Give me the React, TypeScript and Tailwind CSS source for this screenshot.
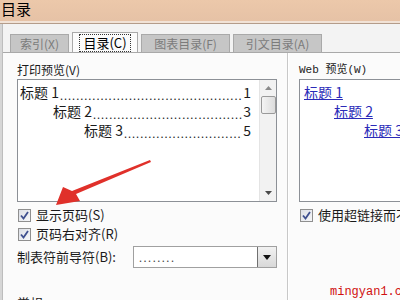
import React from "react";

const FONT = { fontFamily: '"Noto Sans CJK SC", "Noto Sans", sans-serif' };

function CheckBox() {
  return (
    <div className="w-[13px] h-[13px] border border-[#8f8f8f] bg-gradient-to-br from-[#dcdfe6] to-[#f6f7f9] flex items-center justify-center shrink-0">
      <svg width="11" height="11" viewBox="0 0 11 11">
        <path d="M2 5.5 L4.5 8.5 L9 2" fill="none" stroke="#3e4f8f" strokeWidth="1.8" />
      </svg>
    </div>
  );
}

function LeaderLine({ label, num, indent }: { label: string; num: string; indent: string }) {
  return (
    <div className={`flex items-end h-[19px] ${indent} pr-[8px] text-[14px] leading-[19px] text-[#1a1a1a]`}>
      <span className="whitespace-nowrap shrink-0">{label}</span>
      <span className="flex-1 min-w-0 w-0 overflow-hidden whitespace-nowrap text-[11px] leading-[14px] tracking-[1px] mx-[1px]">
        ........................................................................................
      </span>
      <span className="shrink-0">{num}</span>
    </div>
  );
}

export default function App() {
  return (
    <div className="relative w-[400px] h-[300px] overflow-hidden bg-[#f3f3f3] flex flex-col" style={FONT}>
      {/* title bar */}
      <div className="h-[21px] shrink-0 bg-gradient-to-b from-[#ecc8aa] to-[#e6c2a6] flex items-start px-[1px]">
        <span className="text-[15px] leading-[18px] text-black">目录</span>
      </div>
      <div className="h-[2px] shrink-0 bg-[#f1e2d6]" />
      <div className="h-[1px] shrink-0 bg-[#b49c8a]" />

      <div className="flex h-[276px] shrink-0">
        <div className="w-[3px] bg-[#d6d6d6] border-r border-[#bdbdbd] shrink-0" />
        <div className="flex-1 flex flex-col min-w-0">
          {/* tabs */}
          <div className="flex items-end h-[29px] shrink-0 pl-[7px] gap-[3px]">
            <div className="h-[19px] w-[59px] bg-[#c6c6c6] border border-[#a9a9a9] border-b-0 flex items-center justify-center text-[12px] text-[#7b7b7b]">
              索引(X)
            </div>
            <div className="h-[21px] w-[66px] bg-[#fbfbfb] border border-[#a9a9a9] border-b-0 flex items-center justify-center">
              <div className="border border-dotted border-[#333] px-[3px] h-[18px] flex items-center text-[13px] text-black">
                目录(C)
              </div>
            </div>
            <div className="h-[19px] w-[89px] bg-[#c6c6c6] border border-[#a9a9a9] border-b-0 flex items-center justify-center text-[12px] text-[#7b7b7b]">
              图表目录(F)
            </div>
            <div className="h-[19px] w-[89px] bg-[#c6c6c6] border border-[#a9a9a9] border-b-0 flex items-center justify-center text-[12px] text-[#7b7b7b]">
              引文目录(A)
            </div>
            <div className="flex-1 border-b border-[#a9a9a9]" />
          </div>

          {/* panel */}
          <div className="flex-1 min-h-0 overflow-hidden bg-[#fbfbfb] border-t border-[#a9a9a9] -mt-[1px] flex pl-[14px]">
            {/* left column */}
            <div className="w-[260px] flex flex-col shrink-0">
              <div className="h-[26px] shrink-0 pt-[9px] text-[12px] leading-[16px] text-[#1a1a1a]">打印预览(V)</div>
              <div className="h-[123px] shrink-0 border border-[#8c9096] bg-white flex">
                <div className="flex-1 min-w-0 flex flex-col pt-[3px] pl-[2px]">
                  <LeaderLine label="标题 1" num="1" indent="" />
                  <LeaderLine label="标题 2" num="3" indent="pl-[33px]" />
                  <LeaderLine label="标题 3" num="5" indent="pl-[64px]" />
                </div>
                <div className="w-[17px] shrink-0 bg-[#f2f2f2] border-l border-[#e4e4e4] flex flex-col items-center">
                  <div className="h-[16px] flex items-center justify-center">
                    <svg width="7" height="4" viewBox="0 0 7 4"><path d="M0 4 L3.5 0 L7 4 Z" fill="#8a8a8a" /></svg>
                  </div>
                  <div className="w-[15px] h-[18px] rounded-[2px] border border-[#9a9a9a] bg-gradient-to-r from-[#f4f4f4] to-[#dcdcdc]" />
                  <div className="flex-1" />
                  <div className="h-[16px] flex items-center justify-center">
                    <svg width="7" height="4" viewBox="0 0 7 4"><path d="M0 0 L3.5 4 L7 0 Z" fill="#4a4a4a" /></svg>
                  </div>
                </div>
              </div>
              <div className="flex items-center gap-[5px] mt-[4px] h-[18px] shrink-0 pl-[1px] text-[13px] text-[#1a1a1a]">
                <CheckBox />
                <span>显示页码(S)</span>
              </div>
              <div className="flex items-center gap-[5px] h-[20px] shrink-0 pl-[1px] text-[13px] text-[#1a1a1a]">
                <CheckBox />
                <span>页码右对齐(R)</span>
              </div>
              <div className="flex items-center mt-[2px] h-[22px] shrink-0">
                <span className="text-[13px] text-[#1a1a1a] w-[116px]">制表符前导符(B):</span>
                <div className="flex-1 h-[22px] border border-[#a0a0a0] bg-white flex items-center">
                  <span className="flex-1 pl-[5px] text-[11px] leading-[12px] tracking-[1.5px] text-[#444]">........</span>
                  <div className="w-[19px] h-[20px] border-l border-[#707070] bg-gradient-to-b from-[#f2f2f2] to-[#d8d8d8] flex items-center justify-center">
                    <svg width="8" height="5" viewBox="0 0 8 5"><path d="M0 0 L4 5 L8 0 Z" fill="#111" /></svg>
                  </div>
                </div>
              </div>
              <div className="mt-[27px] shrink-0 text-[13px] leading-[16px] text-[#1a1a1a]">常规</div>
            </div>

            {/* divider */}
            <div className="ml-[10px] w-[2px] border-l border-[#c8c8c8] bg-white shrink-0" />

            {/* right column */}
            <div className="flex-1 min-w-0 flex flex-col pl-[10px] overflow-hidden">
              <div className="h-[26px] shrink-0 pt-[9px] text-[11px] leading-[16px] text-[#1a1a1a] whitespace-nowrap" style={{ fontFamily: '"Liberation Mono", "Noto Sans CJK SC", monospace' }}>
                Web 预览(W)
              </div>
              <div className="h-[123px] w-[140px] shrink-0 border border-[#8c9096] bg-white flex flex-col pt-[3px] pl-[4px] text-[14px] leading-[19px] text-[#2a2ab8]">
                <div className="h-[19px] whitespace-nowrap"><span className="underline">标题 1</span></div>
                <div className="h-[19px] whitespace-nowrap pl-[30px]"><span className="underline">标题 2</span></div>
                <div className="h-[19px] whitespace-nowrap pl-[60px]"><span className="underline">标题 3</span></div>
              </div>
              <div className="flex items-center gap-[5px] mt-[4px] h-[18px] shrink-0 pl-[1px] text-[13px] text-[#1a1a1a] whitespace-nowrap">
                <CheckBox />
                <span>使用超链接而不使用页码(H)</span>
              </div>
              <div className="flex-1" />
              <div className="shrink-0 pl-[31px] whitespace-nowrap">
                <span className="text-[12px] leading-[14px] text-[#d01010]" style={{ fontFamily: '"Liberation Mono", monospace' }}>
                  mingyan1.com
                </span>
              </div>
            </div>
          </div>
        </div>
      </div>

      {/* red arrow overlay */}
      <svg className="absolute left-0 top-0 pointer-events-none" width="400" height="300" viewBox="0 0 400 300">
        <path d="M150 160 L151 162 L76 194 L80 201 L56 205 L63 187 L72 191 Z" fill="#e0302a" />
      </svg>
    </div>
  );
}
